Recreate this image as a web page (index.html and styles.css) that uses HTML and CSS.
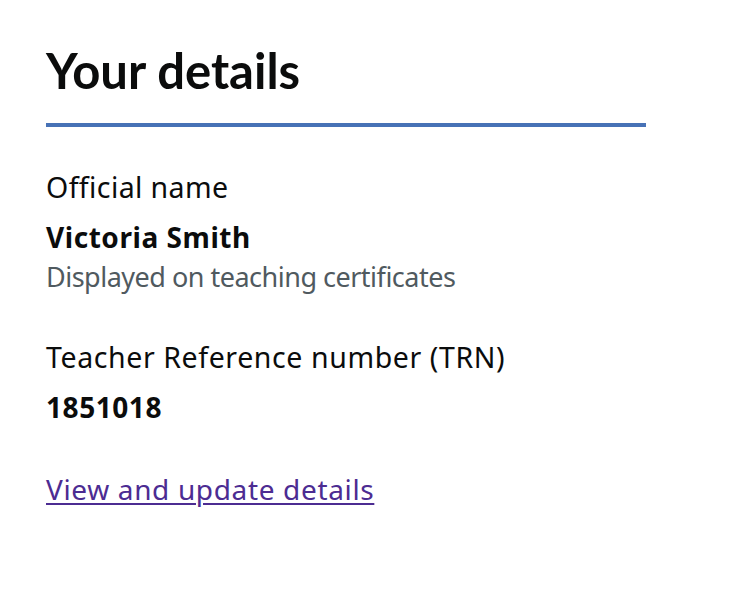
FILE: index.html
```html
<!DOCTYPE html>
<html lang="en">
<head>
<meta charset="utf-8">
<title>Your details</title>
<link rel="stylesheet" href="styles.css">
</head>
<body>
<main class="page">
  <h2 class="title">Your details</h2>
  <dl class="details">
    <div class="item">
      <dt class="label">Official name</dt>
      <dd class="value">Victoria Smith</dd>
      <dd class="hint">Displayed on teaching certificates</dd>
    </div>
    <div class="item">
      <dt class="label label-wide">Teacher Reference number (TRN)</dt>
      <dd class="value">1851018</dd>
    </div>
  </dl>
  <a class="link" href="#">View and update details</a>
</main>
</body>
</html>
```
FILE: styles.css
```css
html, body {
  margin: 0;
  padding: 0;
  background: #ffffff;
}
body {
  font-family: "Noto Sans", "Liberation Sans", Arial, sans-serif;
  color: #0b0c0c;
}
.page {
  padding: 42px 0 0 46px;
  width: 600px;
}
.title {
  margin: 0;
  font-family: Lato, "Noto Sans", sans-serif;
  font-size: 49px;
  line-height: 57px;
  font-weight: 700;
  padding-bottom: 24px;
  border-bottom: 4px solid #4772b6;
}
.details {
  margin: 41px 0 0;
  padding: 0;
}
.item + .item {
  margin-top: 42px;
}
.label {
  font-size: 28.5px;
  line-height: 38px;
  letter-spacing: 0.4px;
  margin: 0;
}
.label-wide {
  letter-spacing: 0.6px;
}
.value {
  margin: 12px 0 0;
  font-size: 28px;
  line-height: 38px;
  letter-spacing: 0.55px;
  font-weight: 700;
}
.hint {
  margin: 2px 0 0;
  font-size: 27px;
  line-height: 38px;
  letter-spacing: -0.5px;
  color: #505a5f;
}
.link {
  display: inline-block;
  margin-top: 44px;
  font-size: 28px;
  line-height: 38px;
  letter-spacing: 0.65px;
  color: #4c2c92;
  text-decoration: underline;
  text-decoration-thickness: 2px;
  text-underline-offset: 3px;
}
```
